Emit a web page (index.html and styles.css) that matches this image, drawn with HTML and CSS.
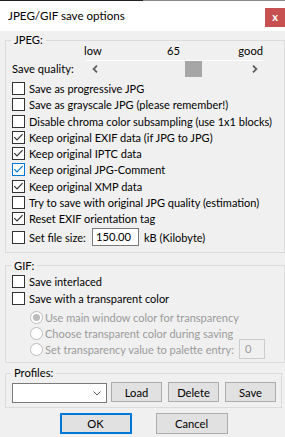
FILE: index.html
```html
<!DOCTYPE html>
<html>
<head>
<meta charset="utf-8">
<title>JPEG/GIF save options</title>
<link rel="stylesheet" href="styles.css">
</head>
<body>
<div class="frame-top"></div>
<div class="titlebar">
  <span class="title">JPEG/GIF save options</span>
  <span class="close">x</span>
</div>
<div class="content">
  <fieldset class="group group-jpeg">
    <legend>JPEG:</legend>
    <div class="group-body">
      <div class="scale"><span class="s-low">low</span><span class="s-mid">65</span><span class="s-high">good</span></div>
      <div class="quality">
        <span class="quality-label">Save quality:</span>
        <div class="scrollbar">
          <span class="sb-btn"><svg width="6" height="8" viewBox="0 0 6 8"><polyline points="5,0.6 1.6,4 5,7.4" fill="none" stroke="#606060" stroke-width="1.8"/></svg></span>
          <span class="sb-track"><span class="sb-thumb" style="--v:0.65"></span></span>
          <span class="sb-btn"><svg width="6" height="8" viewBox="0 0 6 8"><polyline points="1,0.6 4.4,4 1,7.4" fill="none" stroke="#606060" stroke-width="1.8"/></svg></span>
        </div>
      </div>
      <div class="checks">
        <div class="check"><span class="box"></span><span>Save as progressive JPG</span></div>
        <div class="check"><span class="box"></span><span>Save as grayscale JPG (please remember!)</span></div>
        <div class="check"><span class="box"></span><span>Disable chroma color subsampling (use 1x1 blocks)</span></div>
        <div class="check"><span class="box"><svg width="11" height="11" viewBox="0 0 11 11"><polyline points="1.3,5.2 4,8 9.6,2.2" fill="none" stroke="#333" stroke-width="1.2"/></svg></span><span>Keep original EXIF data (if JPG to JPG)</span></div>
        <div class="check"><span class="box"><svg width="11" height="11" viewBox="0 0 11 11"><polyline points="1.3,5.2 4,8 9.6,2.2" fill="none" stroke="#333" stroke-width="1.2"/></svg></span><span>Keep original IPTC data</span></div>
        <div class="check"><span class="box box-focus"><svg width="11" height="11" viewBox="0 0 11 11"><polyline points="1.3,5.2 4,8 9.6,2.2" fill="none" stroke="#0078d7" stroke-width="1.2"/></svg></span><span>Keep original JPG-Comment</span></div>
        <div class="check"><span class="box"><svg width="11" height="11" viewBox="0 0 11 11"><polyline points="1.3,5.2 4,8 9.6,2.2" fill="none" stroke="#333" stroke-width="1.2"/></svg></span><span>Keep original XMP data</span></div>
        <div class="check"><span class="box"></span><span>Try to save with original JPG quality (estimation)</span></div>
        <div class="check"><span class="box"><svg width="11" height="11" viewBox="0 0 11 11"><polyline points="1.3,5.2 4,8 9.6,2.2" fill="none" stroke="#333" stroke-width="1.2"/></svg></span><span>Reset EXIF orientation tag</span></div>
      </div>
      <div class="filesize">
        <span class="box"></span><span class="fs-label">Set file size:</span>
        <span class="edit">150.00</span>
        <span class="fs-unit">kB (Kilobyte)</span>
      </div>
    </div>
  </fieldset>

  <fieldset class="group group-gif">
    <legend>GIF:</legend>
    <div class="group-body">
      <div class="check check-gif"><span class="box"></span><span>Save interlaced</span></div>
      <div class="check check-gif"><span class="box"></span><span>Save with a transparent color</span></div>
      <div class="radios">
        <div class="radio"><span class="dot dot-on"></span><span>Use main window color for transparency</span></div>
        <div class="radio"><span class="dot"></span><span>Choose transparent color during saving</span></div>
        <div class="radio"><span class="dot"></span><span>Set transparency value to palette entry:</span><span class="edit edit-off">0</span></div>
      </div>
    </div>
  </fieldset>

  <fieldset class="group group-profiles">
    <legend>Profiles:</legend>
    <div class="group-body">
      <div class="profiles">
        <span class="combo"><svg width="8" height="5" viewBox="0 0 8 5"><polyline points="0.5,0.5 4,4 7.5,0.5" fill="none" stroke="#555" stroke-width="1"/></svg></span>
        <span class="btn">Load</span>
        <span class="btn">Delete</span>
        <span class="btn">Save</span>
      </div>
    </div>
  </fieldset>

  <div class="actions">
    <span class="btn btn-main btn-default">OK</span>
    <span class="btn btn-main">Cancel</span>
  </div>
</div>
</body>
</html>
```

FILE: styles.css
```css
* { box-sizing: border-box; }
html, body { margin: 0; padding: 0; }
body {
  width: 285px;
  height: 437px;
  overflow: hidden;
  background: #f0f0f0;
  font-family: "Lato", "Liberation Sans", sans-serif;
  font-size: 11px;
  color: #000;
}
.frame-top {
  height: 1px;
  background: linear-gradient(to right, #1f1f1f 0, #1f1f1f 143px, #8a8a8a 143px);
}
.titlebar {
  height: 30px;
  background: #fff;
  display: flex;
  justify-content: space-between;
  align-items: flex-start;
}
.title { padding-left: 8px; line-height: 30px; font-size: 11.6px; }
.close {
  width: 20px;
  height: 19px;
  margin-top: 7px;
  background: #c75050;
  color: #fff;
  font-weight: bold;
  font-size: 11px;
  line-height: 17px;
  text-align: center;
}
.content {
  padding: 4px 0 0 5px;
  display: flex;
  flex-direction: column;
}
.group {
  margin: 0;
  padding: 0;
  border: 1px solid #dcdcdc;
  min-width: 0;
}
.group legend {
  margin-left: 5px;
  padding: 0 3px;
  line-height: 10px;
  font-size: 11.2px;
}
.group-body {
  padding-left: 6px;
  display: flex;
  flex-direction: column;
}
.group-jpeg { padding-bottom: 6px; }
.scale {
  display: grid;
  grid-template-columns: 1fr auto 1fr;
  margin: 0 21px 0 72px;
  height: 12px;
  line-height: 12px;
  font-size: 11.2px;
}
.s-low { justify-self: start; }
.s-high { justify-self: end; }
.quality {
  display: flex;
  margin-top: 3px;
  height: 17px;
  line-height: 18px;
}
.quality-label { width: 74px; font-size: 11.2px; }
.scrollbar {
  width: 177px;
  height: 17px;
  display: flex;
  border-top: 1px solid #fff;
}
.sb-btn {
  width: 17px;
  display: flex;
  align-items: center;
  justify-content: center;
}
.sb-track { flex: 1; display: flex; }
.sb-thumb {
  width: 17px;
  height: 16px;
  background: #a6a6a6;
  margin-left: calc((100% - 17px) * var(--v));
}
.checks {
  margin-top: 3.5px;
  display: flex;
  flex-direction: column;
}
.check {
  height: 16.25px;
  display: flex;
  align-items: center;
  white-space: nowrap;
}
.box {
  width: 13px;
  height: 13px;
  flex: none;
  border: 1px solid #333;
  background: #fff;
  margin-right: 4px;
  display: flex;
  align-items: center;
  justify-content: center;
}
.box-focus { border-color: #0078d7; }
.filesize {
  margin-top: 1.25px;
  height: 18px;
  display: flex;
  align-items: center;
}
.fs-label { width: 63px; }
.edit {
  width: 47px;
  height: 18px;
  border: 1px solid #7a7a7a;
  background: #fff;
  padding-left: 3px;
  line-height: 16px;
  font-size: 11.2px;
}
.fs-unit { margin-left: 5px; }
.group-gif { margin-top: 7.5px; padding-bottom: 5px; }
.group-gif .group-body { padding-top: 2px; }
.check-gif { height: 17px; }
.radios {
  margin-top: 2.5px;
  padding-left: 18px;
  display: flex;
  flex-direction: column;
  color: #9b9b9b;
}
.radio {
  height: 16px;
  display: flex;
  align-items: center;
  white-space: nowrap;
}
.dot {
  width: 13px;
  height: 13px;
  flex: none;
  border: 1px solid #bcbcbc;
  border-radius: 50%;
  background: #fff;
  margin-right: 2px;
  display: flex;
  align-items: center;
  justify-content: center;
}
.dot-on::after {
  content: "";
  width: 7px;
  height: 7px;
  border-radius: 50%;
  background: #bcbcbc;
}
.edit-off {
  width: 26px;
  height: 20px;
  margin: -2px 19px -2px auto;
  border-color: #cccccc;
  background: #f0f0f0;
  color: #9b9b9b;
  padding-left: 5px;
  line-height: 17px;
}
.group-profiles { margin: 5px 3px 0 0; padding-bottom: 4px; }
.profiles {
  margin-top: 4px;
  height: 21px;
  display: flex;
  align-items: flex-start;
  gap: 6px;
}
.combo {
  width: 95px;
  height: 20px;
  margin-top: 1px;
  margin-right: -2px;
  border: 1px solid #7a7a7a;
  background: #fff;
  display: flex;
  align-items: center;
  justify-content: flex-end;
  padding-right: 5px;
}
.btn {
  width: 51px;
  height: 20px;
  border: 1px solid #adadad;
  background: #e1e1e1;
  display: flex;
  align-items: center;
  justify-content: center;
  font-size: 11.2px;
}
.actions {
  margin-top: 5px;
  display: flex;
  justify-content: center;
  gap: 24px;
  padding-right: 3px;
}
.btn-main { width: 72px; height: 21px; }
.btn-default { border: 2px solid #0078d7; }
```
